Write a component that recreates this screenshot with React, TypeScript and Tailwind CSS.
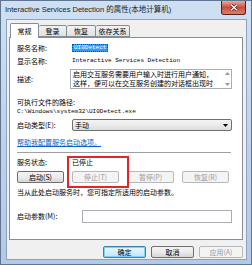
import React from 'react';

const cjk = "font-['Noto_Sans_CJK_SC',sans-serif]";
const mono = "font-['Liberation_Mono','DejaVu_Sans_Mono',monospace]";

const Btn = ({ label, disabled, primary, className = '' }: { label: string; disabled?: boolean; primary?: boolean; className?: string }) => {
    const base = 'h-[12px] flex items-center justify-center rounded-[2px] text-[7px] leading-none';
    const look = disabled
        ? 'border border-[#b5b9bd] bg-[#f4f4f4] text-[#9a9a9a]'
        : primary
            ? 'border border-[#3c7fb1] bg-gradient-to-b from-[#eaf6fd] to-[#bee6fd] text-black shadow-[inset_0_0_0_1px_#7fd0f5]'
            : 'border border-[#707070] bg-gradient-to-b from-[#f2f2f2] via-[#ebebeb] to-[#d6d6d6] text-black';
    return <div className={`${base} ${look} ${className}`}>{label}</div>;
};

export default function App() {
    return (
        <div className={`w-[252px] h-[265px] relative flex flex-col bg-gradient-to-b from-[#cfe0f3] via-[#bdd3ec] to-[#b3cae6] border border-[#5f7590] ${cjk}`}>
            {/* Title bar */}
            <div className="h-[18px] flex items-center pl-[4px] text-[7.5px] text-[#1b1b1b] font-['Liberation_Sans','Noto_Sans_CJK_SC',sans-serif]">
                Interactive Services Detection 的属性(本地计算机)
            </div>
            <div className="absolute right-[5px] top-0 w-[25px] h-[14px] rounded-b-[3px] border border-t-0 border-[#5a1d16] bg-gradient-to-b from-[#e9a99b] via-[#c94d3e] to-[#d5826f] flex items-center justify-center">
                <svg width="8" height="7" viewBox="0 0 8 7">
                    <path d="M1 0.8 L7 6.2 M7 0.8 L1 6.2" stroke="#4a1510" strokeWidth="2.6" />
                    <path d="M1 0.8 L7 6.2 M7 0.8 L1 6.2" stroke="#ffffff" strokeWidth="1.4" />
                </svg>
            </div>

            {/* Client area */}
            <div className="h-[241px] ml-[5px] mr-[4px] bg-[#f0f0f0] border border-[#8da2bd] flex flex-col">
                {/* Tabs */}
                <div className="h-[17px] flex items-end pl-[3px] text-[7px] leading-none text-black relative z-10">
                    <div className="w-[29px] h-[15px] -mb-[1px] bg-white border border-b-0 border-[#898c95] rounded-t-[2px] flex items-center justify-center">常规</div>
                    <div className="w-[28px] h-[12px] border border-l-0 border-[#898c95] bg-gradient-to-b from-[#f3f3f3] to-[#e0e0e0] rounded-t-[2px] flex items-center justify-center">登录</div>
                    <div className="w-[29px] h-[12px] border border-l-0 border-[#898c95] bg-gradient-to-b from-[#f3f3f3] to-[#e0e0e0] rounded-t-[2px] flex items-center justify-center">恢复</div>
                    <div className="w-[34px] h-[12px] border border-l-0 border-[#898c95] bg-gradient-to-b from-[#f3f3f3] to-[#e0e0e0] rounded-t-[2px] flex items-center justify-center">依存关系</div>
                </div>

                {/* Panel */}
                <div className="relative ml-[2px] w-[234px] h-[203px] bg-white border border-[#898c95] pt-[4px] pl-[7px] text-[7px] leading-none text-black">
                    <div className="h-[12px] flex items-center">
                        <div className="w-[55px]">服务名称:</div>
                        <div className={`${mono} text-[6px] bg-[#3399ff] text-white px-[1px] h-[8px] flex items-center border border-dotted border-[#1c4f8a]`}>UI0Detect</div>
                    </div>
                    <div className="h-[12px] mt-[1px] flex items-center">
                        <div className="w-[55px]">显示名称:</div>
                        <div className={`${mono} text-[6px]`}>Interactive Services Detection</div>
                    </div>
                    <div className="h-[20px] mt-[2px] flex items-center">
                        <div className="w-[53px]">描述:</div>
                        <div className="w-[162px] h-[20px] border border-[#abadb3] flex">
                            <div className="flex-1 pl-[2px] leading-[9px] whitespace-nowrap">
                                <div>启用交互服务需要用户输入时进行用户通知，</div>
                                <div>这样，便可以在交互服务创建的对话框出现时</div>
                            </div>
                            <div className="w-[8px] flex flex-col justify-between items-center py-[2px]">
                                <svg width="5" height="3" viewBox="0 0 5 3"><path d="M0 3 L2.5 0 L5 3Z" fill="#999" /></svg>
                                <svg width="5" height="3" viewBox="0 0 5 3"><path d="M0 0 L2.5 3 L5 0Z" fill="#999" /></svg>
                            </div>
                        </div>
                    </div>
                    <div className="h-[10px] mt-[8px] flex items-center">可执行文件的路径:</div>
                    <div className={`h-[9px] flex items-center ${mono} text-[6px]`}>C:\Windows\system32\UI0Detect.exe</div>
                    <div className="h-[12px] mt-[3px] flex items-center">
                        <div className="w-[55px]">启动类型(E):</div>
                        <div className="w-[160px] h-[12px] border border-[#707070] rounded-[2px] bg-gradient-to-b from-[#f4f4f4] via-[#ebebeb] to-[#dcdcdc] flex items-center justify-between pl-[2px] pr-[3px]">
                            <span>手动</span>
                            <svg width="5" height="3" viewBox="0 0 5 3"><path d="M0 0 L2.5 3 L5 0Z" fill="#000" /></svg>
                        </div>
                    </div>
                    <div className="h-[12px] mt-[5px] flex items-center text-[#0066cc] underline">帮助我配置服务启动选项。</div>
                    <div className="mt-[4px] w-[214px] h-[2px] border-t border-[#a0a0a0] border-b border-b-white" />
                    <div className="h-[12px] mt-[2px] flex items-center">
                        <div className="w-[55px]">服务状态:</div>
                        <div>已停止</div>
                    </div>
                    <div className="h-[12px] mt-[3px] flex items-center gap-[8px]">
                        <Btn label="启动(S)" className="w-[47px]" />
                        <Btn label="停止(T)" disabled className="w-[47px]" />
                        <Btn label="暂停(P)" disabled className="w-[47px]" />
                        <Btn label="恢复(R)" disabled className="w-[47px]" />
                    </div>
                    <div className="h-[12px] mt-[3px] flex items-center">当从此处启动服务时，您可指定所适用的启动参数。</div>
                    <div className="h-[13px] mt-[12px] flex items-center">
                        <div className="w-[65px]">启动参数(M):</div>
                        <div className="w-[150px] h-[13px] border border-[#abadb3] bg-white" />
                    </div>

                    {/* Red annotation box */}
                    <div className="absolute left-[57px] top-[118px] w-[62px] h-[32px] border-2 border-[#e3252b]" />
                </div>

                {/* Dialog buttons */}
                <div className="h-[12px] mt-[6px] flex justify-end gap-[5px] pr-[3px] text-[7px]">
                    <Btn label="确定" primary className="w-[43px]" />
                    <Btn label="取消" className="w-[43px]" />
                    <Btn label="应用(A)" disabled className="w-[44px]" />
                </div>
            </div>
        </div>
    );
}
